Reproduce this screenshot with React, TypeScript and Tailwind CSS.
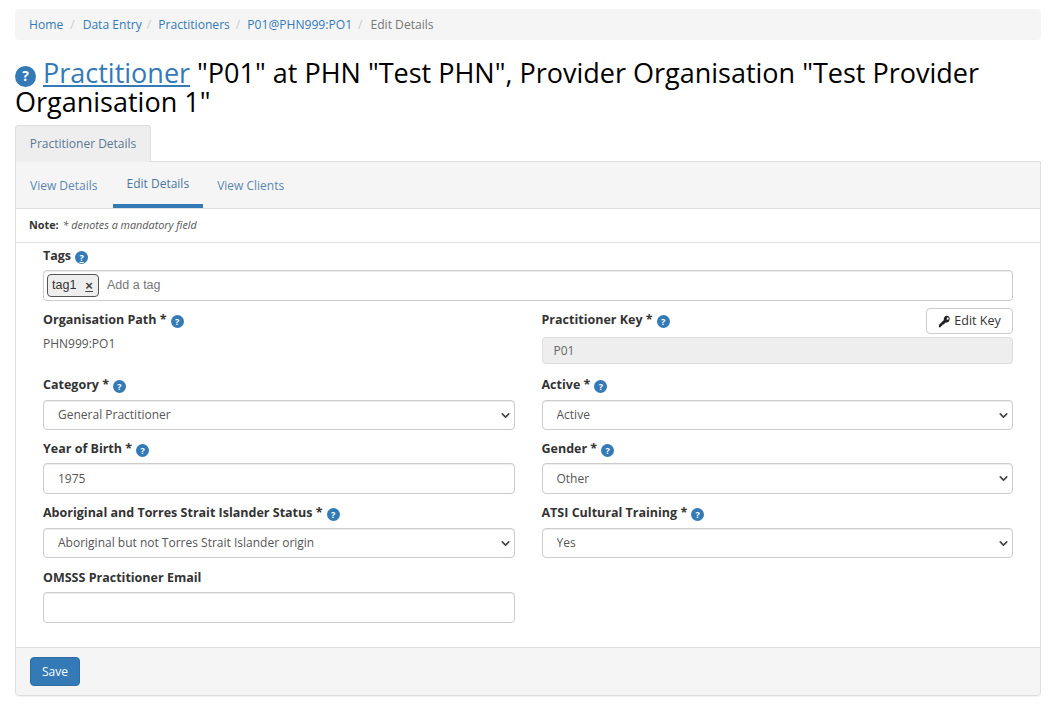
import React from "react";
import { ChevronDown } from "lucide-react";

/* Small blue help badge used next to labels */
function Help({ underline = false, className = "" }: { underline?: boolean; className?: string }) {
  return (
    <span
      className={`inline-flex w-[13px] h-[13px] rounded-full bg-[#337ab7] text-white text-[9px] font-bold leading-none items-center justify-center align-[-1px] ml-[4px] ${underline ? "underline" : ""} ${className}`}
    >
      ?
    </span>
  );
}

function Label({ text, help = true, underline = false, tight = false }: { text: string; help?: boolean; underline?: boolean; tight?: boolean }) {
  return (
    <label className={`block text-[12.5px] leading-[17px] font-bold text-[#333] ${tight ? "h-[23px]" : "h-[24px]"}`}>
      {text}
      {help && <Help underline={underline} />}
    </label>
  );
}

function Field({ label, value, help = true, tight = false }: { label: string; value: string; help?: boolean; tight?: boolean }) {
  return (
    <div className="h-[64px]">
      <Label text={label} help={help} tight={tight} />
      <input
        readOnly
        value={value}
        className="w-full h-[31px] bg-white border border-[#ccc] rounded-[4px] px-[14px] text-[12px] text-[#555] shadow-[inset_0_1px_1px_rgba(0,0,0,0.075)]"
      />
    </div>
  );
}

function SelectField({ label, value, tight = false, rowClass = "h-[64px]" }: { label: string; value: string; tight?: boolean; rowClass?: string }) {
  return (
    <div className={rowClass}>
      <Label text={label} tight={tight} />
      <div className={`relative ${tight ? "h-[31px]" : "h-[30px]"}`}>
        <select
          defaultValue={value}
          className="w-full h-full appearance-none bg-white border border-[#ccc] rounded-[4px] pl-[14px] pr-6 text-[12px] text-[#555] shadow-[inset_0_1px_1px_rgba(0,0,0,0.075)]"
        >
          <option>{value}</option>
        </select>
        <ChevronDown
          size={13}
          strokeWidth={3}
          className="absolute right-[3px] top-[9px] text-[#444] pointer-events-none"
        />
      </div>
    </div>
  );
}

export default function App() {
  return (
    <div className="min-h-screen bg-white pl-[15px] pr-[16px] pt-[9px] font-['Open_Sans',sans-serif] text-[12px] text-[#333]">
      {/* Breadcrumb */}
      <div className="h-[31px] bg-[#f5f5f5] rounded-[4px] flex items-center pl-[14px] pt-px text-[12.1px]">
        <a className="text-[#337ab7]">Home</a>
        <span className="text-[#ccc] pl-[7px] pr-[8px]">/</span>
        <a className="text-[#337ab7]">Data Entry</a>
        <span className="text-[#ccc] pl-[5px] pr-[7px]">/</span>
        <a className="text-[#337ab7]">Practitioners</a>
        <span className="text-[#ccc] pl-[6px] pr-[7px]">/</span>
        <a className="text-[#337ab7]">P01@PHN999:PO1</a>
        <span className="text-[#ccc] pl-[6px] pr-[8px]">/</span>
        <span className="text-[#777]">Edit Details</span>
      </div>

      {/* Title */}
      <h1 className="mt-[18px] text-[27px] leading-[29px] font-normal text-black">
        <Help className="!w-[21px] !h-[21px] !text-[14px] !ml-0 mr-[7px] !align-[2px] my-[-6px]" />
        <a className="text-[#337ab7] underline">Practitioner</a> "P01" at PHN "Test PHN", Provider Organisation "Test Provider Organisation 1"
      </h1>

      {/* Outer tab */}
      <div className="mt-[9px] flex">
        <div className="h-[37px] w-[136px] bg-[#eee] border border-[#ddd] border-b-0 rounded-t-[4px] flex items-center justify-center text-[#5a7896]">
          Practitioner Details
        </div>
      </div>

      {/* Panel */}
      <div className="-mt-px border border-[#ddd] rounded-b-[4px] bg-white shadow-[0_1px_1px_rgba(0,0,0,0.05)]">
        <div className="h-[47px] bg-[#f5f5f5] border-b border-[#ddd] flex text-[#5a87b0]">
          <a className="pl-[14px] pr-[15px] h-[46px] flex items-center pt-[1px]">View Details</a>
          <a className="px-[14px] h-[46px] flex items-center pt-[2px] border-b-[4px] border-[#337ab7] text-[#4a76a0]">Edit Details</a>
          <a className="px-[14px] h-[46px] flex items-center pt-[1px]">View Clients</a>
        </div>

        <div className="h-[34px] border-b border-[#ddd] flex items-center pl-[13px] text-[10.8px] text-[#333]">
          <b className="mr-[4px]">Note:</b>
          <i className="text-[#555]">* denotes a mandatory field</i>
        </div>

        <div className="px-[27px] pt-[4px] h-[404px]">
          <Label text="Tags" underline />
          <div className="h-[31px] -mt-px border border-[#ccc] rounded-[4px] flex items-center pl-[3px] shadow-[inset_0_1px_1px_rgba(0,0,0,0.075)]">
            <span className="h-[23px] w-[52px] bg-[#eee] border border-[#555] rounded-[4px] flex items-center pl-[4px] font-['Liberation_Sans',sans-serif] text-[12.5px] text-[#333]">
              tag1
              <span className="ml-[9px] text-[13px] font-bold underline text-[#444]">×</span>
            </span>
            <span className="ml-[8px] font-['Liberation_Sans',sans-serif] text-[12.5px] text-[#777]">Add a tag</span>
          </div>

          <div className="grid grid-cols-2 gap-x-[27px] mt-[10px]">
            <div className="h-[65px]">
              <Label text="Organisation Path *" />
              <div className="pt-px leading-[16px] text-[#555]">PHN999:PO1</div>
            </div>
            <div className="h-[65px]">
              <div className="flex justify-between h-[26px]">
                <Label text="Practitioner Key *" />
                <button className="h-[26px] w-[87px] -mt-[3px] border border-[#ccc] rounded-[4px] bg-white flex items-center justify-center gap-[3px] text-[12.5px] text-[#333]">
                  <svg viewBox="0 0 16 16" className="w-[13px] h-[13px]" fill="#222">
                    <path d="M11 1a4 4 0 0 0-3.8 5.2L1.3 12.1 1 15l2.4.1.3-1.6 1.5-.2.3-1.5 1.5-.2 2.4-2.4A4 4 0 1 0 11 1zm1 2.2a1.3 1.3 0 1 1 0 2.6 1.3 1.3 0 0 1 0-2.6z" />
                  </svg>
                  Edit Key
                </button>
              </div>
              <input
                readOnly
                value="P01"
                className="w-full h-[27px] bg-[#eee] border border-[#ddd] rounded-[4px] px-[11px] text-[12px] text-[#666]"
              />
            </div>

            <SelectField label="Category *" value="General Practitioner" />
            <SelectField label="Active *" value="Active" />
            <Field label="Year of Birth *" value="1975" tight />
            <SelectField label="Gender *" value="Other" tight />
            <SelectField label="Aboriginal and Torres Strait Islander Status *" value="Aboriginal but not Torres Strait Islander origin" rowClass="h-[65px]" />
            <SelectField label="ATSI Cultural Training *" value="Yes" rowClass="h-[65px]" />
            <Field label="OMSSS Practitioner Email" value="" help={false} tight />
          </div>
        </div>

        <div className="h-[48px] bg-[#f5f5f5] border-t border-[#ddd] rounded-b-[4px] flex items-center pl-[14px]">
          <button className="h-[29px] w-[50px] bg-[#337ab7] border border-[#2e6da4] rounded-[4px] text-white">Save</button>
        </div>
      </div>
    </div>
  );
}
